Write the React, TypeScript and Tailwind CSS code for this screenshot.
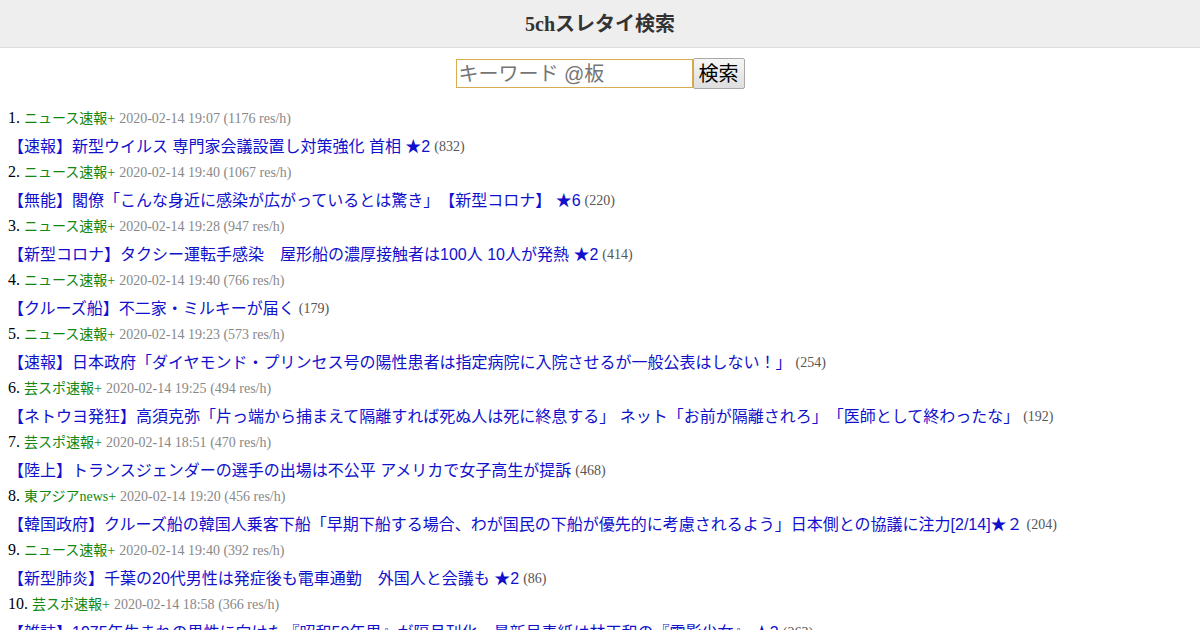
const threads = [
  { board: 'ニュース速報+', date: '2020-02-14 19:07', rate: 1176, title: '【速報】新型ウイルス 専門家会議設置し対策強化 首相 ★2', res: 832 },
  { board: 'ニュース速報+', date: '2020-02-14 19:40', rate: 1067, title: '【無能】閣僚「こんな身近に感染が広がっているとは驚き」【新型コロナ】 ★6', res: 220 },
  { board: 'ニュース速報+', date: '2020-02-14 19:28', rate: 947, title: '【新型コロナ】タクシー運転手感染　屋形船の濃厚接触者は100人 10人が発熱 ★2', res: 414 },
  { board: 'ニュース速報+', date: '2020-02-14 19:40', rate: 766, title: '【クルーズ船】不二家・ミルキーが届く', res: 179 },
  { board: 'ニュース速報+', date: '2020-02-14 19:23', rate: 573, title: '【速報】日本政府「ダイヤモンド・プリンセス号の陽性患者は指定病院に入院させるが一般公表はしない！」', res: 254 },
  { board: '芸スポ速報+', date: '2020-02-14 19:25', rate: 494, title: '【ネトウヨ発狂】高須克弥「片っ端から捕まえて隔離すれば死ぬ人は死に終息する」 ネット「お前が隔離されろ」「医師として終わったな」', res: 192 },
  { board: '芸スポ速報+', date: '2020-02-14 18:51', rate: 470, title: '【陸上】トランスジェンダーの選手の出場は不公平 アメリカで女子高生が提訴', res: 468 },
  { board: '東アジアnews+', date: '2020-02-14 19:20', rate: 456, title: '【韓国政府】クルーズ船の韓国人乗客下船「早期下船する場合、わが国民の下船が優先的に考慮されるよう」日本側との協議に注力[2/14]★２', res: 204 },
  { board: 'ニュース速報+', date: '2020-02-14 19:40', rate: 392, title: '【新型肺炎】千葉の20代男性は発症後も電車通勤　外国人と会議も ★2', res: 86 },
  { board: '芸スポ速報+', date: '2020-02-14 18:58', rate: 366, title: '【雑誌】1975年生まれの男性に向けた『昭和50年男』が隔月刊化　最新号表紙は林正和の『電影少女』 ★3', res: 263 },
];

export default function App() {
  return (
    <div className="min-h-screen bg-white text-black font-['Liberation_Serif','Noto_Sans_CJK_JP',serif]">
      <header className="flex h-[48px] items-center justify-center border-b border-[#dddddd] bg-[#eeeeee]">
        <h1 className="text-[20px] font-bold text-[#333333]">5chスレタイ検索</h1>
      </header>

      <form className="flex items-center justify-center pt-[10px]" onSubmit={(e) => e.preventDefault()}>
        <input
          type="text"
          placeholder="キーワード @板"
          className="h-[29px] w-[237px] border border-[#d9ab52] bg-white px-[2px] text-[20px] font-['Liberation_Sans','Noto_Sans_CJK_JP',sans-serif] text-black placeholder:text-[#757575] outline-none"
        />
        <button
          type="submit"
          className="h-[31px] w-[52px] rounded-[2px] border border-[#a9a9a9] bg-gradient-to-b from-[#f6f6f6] to-[#dedede] text-[20px] font-['Liberation_Sans','Noto_Sans_CJK_JP',sans-serif] leading-none text-black"
        >
          検索
        </button>
      </form>

      <ol className="mt-[16px] px-[8px]">
        {threads.map((t, i) => (
          <li key={i}>
            <div className="flex h-[26px] items-center whitespace-nowrap">
              <span className="text-[16px]">{i + 1}.</span>
              <span className="ml-[4px] text-[14px] text-[#118811]">{t.board}</span>
              <span className="ml-[4px] text-[14px] text-[#888888]">
                {t.date} ({t.rate} res/h)
              </span>
            </div>
            <div className="flex h-[28px] items-center whitespace-nowrap pt-[3px]">
              <a
                href="#"
                className="text-[16px] text-[#1111cc] [text-spacing-trim:space-all] font-['Liberation_Sans','Noto_Sans_CJK_JP',sans-serif]"
              >
                {t.title}
              </a>
              <span className="ml-[4px] text-[14px] text-[#555555]">({t.res})</span>
            </div>
          </li>
        ))}
      </ol>
    </div>
  );
}
